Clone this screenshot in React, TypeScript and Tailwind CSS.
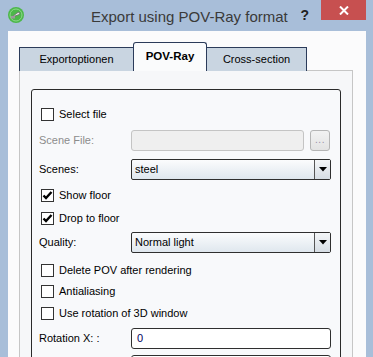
import { ReactNode } from 'react'

const font = { fontFamily: '"Liberation Sans", Arial, sans-serif' }

function CheckBox({ checked = false }: { checked?: boolean }) {
  return (
    <div className="w-[13px] h-[13px] border border-[#333333] bg-white flex items-center justify-center shrink-0">
      {checked && (
        <svg width="11" height="11" viewBox="0 0 11 11">
          <path d="M1.5 5.5 L4 8 L9.5 2" stroke="#000" strokeWidth="2.4" fill="none" />
        </svg>
      )}
    </div>
  )
}

function CheckRow({ label, checked, className }: { label: string; checked?: boolean; className: string }) {
  return (
    <div className={`flex items-center h-[13px] pl-[9px] ${className}`}>
      <CheckBox checked={checked} />
      <span className="ml-[5px] text-[11px] text-black">{label}</span>
    </div>
  )
}

function FieldRow({ label, children, className, dim }: { label: string; children: ReactNode; className: string; dim?: boolean }) {
  return (
    <div className={`flex items-center h-[21px] pl-[7px] ${className}`}>
      <span className={`w-[92px] text-[11px] ${dim ? 'text-[#8c8c8c]' : 'text-black'}`}>{label}</span>
      {children}
    </div>
  )
}

function Combo({ value }: { value: string }) {
  return (
    <div className="w-[200px] h-[21px] border border-[#2f2f2f] rounded-[2px] bg-gradient-to-b from-[#fbfcfd] to-[#dfe7ee] flex items-center">
      <span className="flex-1 pl-[3px] text-[11px] text-black">{value}</span>
      <div className="w-[16px] h-[19px] border-l border-[#555] bg-gradient-to-b from-[#f4f6f8] to-[#d6dde4] flex items-center justify-center">
        <svg width="8" height="5" viewBox="0 0 8 5">
          <path d="M0 0 H8 L4 4.5 Z" fill="#000" />
        </svg>
      </div>
    </div>
  )
}

export default function App() {
  return (
    <div className="w-[373px] h-[357px] bg-[#a8bed9] flex flex-col overflow-hidden select-none" style={font}>
      {/* title bar */}
      <div className="h-[31px] flex items-start shrink-0">
        <div className="w-[16px] h-[16px] mt-[7px] ml-[8px] rounded-full bg-[#4cb84a] flex items-center justify-center">
          <svg width="14" height="14" viewBox="0 0 14 14">
            <circle cx="7" cy="7" r="6" fill="none" stroke="#8ed88a" strokeWidth="1" />
            <path d="M3 9 L8 5 L10 4 L11 6 L9 7 Z" fill="#e8e8e8" stroke="#6b6b6b" strokeWidth="0.8" />
            <rect x="2" y="8" width="4" height="2.5" fill="#9a9a9a" />
          </svg>
        </div>
        <div className="ml-[67px] text-[15px] text-[#3a3a3a] mt-[6px]">Export using POV-Ray format</div>
        <div className="ml-auto mt-[5px] text-[14px] font-bold text-[#222]">?</div>
        <div className="w-[45px] h-[20px] ml-[12px] mr-[7px] bg-[#c75050] flex items-center justify-center">
          <svg width="10" height="9" viewBox="0 0 10 9">
            <path d="M1 0.5 L9 8.5 M9 0.5 L1 8.5" stroke="#fff" strokeWidth="2" />
          </svg>
        </div>
      </div>

      {/* client area */}
      <div className="flex-1 ml-[8px] mr-[7px] bg-[#fbfbfc] pl-[11px] pr-[13px] pt-[11px] flex flex-col">
        {/* tabs */}
        <div className="flex items-end h-[29px] relative z-10 -mb-[1px]">
          <div className="w-[115px] h-[24px] border border-[#2b3b5a] border-b-0 bg-[#c9d5e1] flex items-center justify-center text-[11px] text-black">
            Exportoptionen
          </div>
          <div className="w-[74px] h-[29px] -ml-[1px] border border-[#2b3b5a] border-b-0 rounded-t-[3px] bg-[#fafbfc] flex items-center justify-center text-[11.5px] font-bold text-black">
            POV-Ray
          </div>
          <div className="w-[101px] h-[24px] -ml-[1px] border border-[#2b3b5a] border-b-0 bg-[#c9d5e1] flex items-center justify-center text-[11px] text-black">
            Cross-section
          </div>
        </div>

        {/* pane */}
        <div className="flex-1 border-l border-r border-t border-[#c6c6c6] bg-[#f6f7f9] px-[11px] pt-[18px]">
          <div className="h-[300px] border border-[#2a2a2a] rounded-[3px] bg-[#f8f9fb] flex flex-col">
            <CheckRow label="Select file" className="mt-[18px]" />
            <FieldRow label="Scene File:" className="mt-[9px]" dim>
              <div className="w-[173px] h-[21px] border border-[#c4c4c4] rounded-[3px] bg-[#efefef]" />
              <div className="w-[20px] h-[21px] ml-[6px] border border-[#b5b5b5] rounded-[3px] bg-gradient-to-b from-[#f2f2f2] to-[#e3e3e3] flex items-end justify-center pb-[5px]">
                <span className="text-[10px] leading-none text-[#9a8fa8] tracking-[0.5px]">...</span>
              </div>
            </FieldRow>
            <FieldRow label="Scenes:" className="mt-[8px]">
              <Combo value="steel" />
            </FieldRow>
            <CheckRow label="Show floor" checked className="mt-[9px]" />
            <CheckRow label="Drop to floor" checked className="mt-[10px]" />
            <FieldRow label="Quality:" className="mt-[7px]">
              <Combo value="Normal light" />
            </FieldRow>
            <CheckRow label="Delete POV after rendering" className="mt-[11px]" />
            <CheckRow label="Antialiasing" className="mt-[8px]" />
            <CheckRow label="Use rotation of 3D window" className="mt-[9px]" />
            <FieldRow label="Rotation X: :" className="mt-[8px]">
              <div className="w-[200px] h-[21px] border border-[#2f2f2f] rounded-[3px] bg-white flex items-center pl-[5px] text-[11px] text-[#000060]">0</div>
            </FieldRow>
            <FieldRow label="" className="mt-[6px]">
              <div className="w-[200px] h-[21px] border border-[#2f2f2f] rounded-[3px] bg-white" />
            </FieldRow>
          </div>
        </div>
      </div>
    </div>
  )
}
